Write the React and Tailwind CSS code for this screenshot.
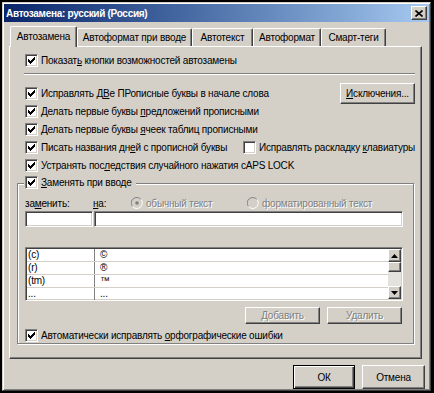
import React from "react";

const raised =
  "border border-t-white border-l-white border-r-[#404040] border-b-[#404040] shadow-[inset_-1px_-1px_0_#808080]";
const sunken =
  "border border-t-[#808080] border-l-[#808080] border-r-white border-b-white shadow-[inset_1px_1px_0_#404040,inset_-1px_-1px_0_#d4d0c8]";

function Check({ checked = true }) {
  return (
    <span className={"inline-flex w-[13px] h-[13px] bg-white shrink-0 items-center justify-center " + sunken}>
      {checked && (
        <svg width="7" height="7" viewBox="0 0 7 7" shapeRendering="crispEdges">
          <rect x="0" y="2" width="1" height="3" />
          <rect x="1" y="3" width="1" height="3" />
          <rect x="2" y="4" width="1" height="3" />
          <rect x="3" y="3" width="1" height="3" />
          <rect x="4" y="2" width="1" height="3" />
          <rect x="5" y="1" width="1" height="3" />
          <rect x="6" y="0" width="1" height="3" />
        </svg>
      )}
    </span>
  );
}

function CheckRow({ children, className = "" }) {
  return (
    <div className={"flex items-center gap-[2px] h-[18px] " + className}>
      <Check />
      <span className="ml-[1px]">{children}</span>
    </div>
  );
}

function Radio({ dot }) {
  return (
    <span className="relative inline-block w-[12px] h-[12px] shrink-0">
      <svg width="12" height="12" viewBox="0 0 12 12">
        <path d="M10 2.5 A5 5 0 0 0 1.5 9.5" stroke="#808080" strokeWidth="1" fill="none" />
        <path d="M1.5 9.5 A5 5 0 0 0 10 2.5" stroke="#ffffff" strokeWidth="1" fill="none" />
        <circle cx="6" cy="6" r="4" fill="#d4d0c8" />
        {dot && <circle cx="6" cy="6" r="1.8" fill="#808080" />}
      </svg>
    </span>
  );
}

function Button({ children, className = "", disabled, def }) {
  return (
    <div
      className={
        "flex items-center justify-center bg-[#d4d0c8] " +
        (def
          ? "border border-black shadow-[inset_1px_1px_0_#fff,inset_-1px_-1px_0_#404040,inset_-2px_-2px_0_#808080] "
          : raised + " ") +
        (disabled ? "text-[#808080] [text-shadow:1px_1px_0_#fff] " : "") +
        className
      }
    >
      {children}
    </div>
  );
}

function Tab({ children, selected, className = "" }) {
  return (
    <div
      className={
        "relative flex items-center justify-center border-l border-t border-l-white border-t-white border-r border-r-[#404040] rounded-tl-[2px] rounded-tr-[2px] bg-[#d4d0c8] shadow-[inset_-1px_0_0_#808080] " +
        (selected ? "h-[21px] z-10 -mb-[1px] pb-[1px] " : "h-[18px] ") +
        className
      }
    >
      {children}
    </div>
  );
}

function ScrollArrow({ up }) {
  return (
    <div className={"w-[13px] h-[13px] flex items-center justify-center bg-[#d4d0c8] " + raised}>
      <svg width="7" height="4" viewBox="0 0 7 4">
        {up ? <path d="M3.5 0 L7 4 L0 4 Z" fill="#000" /> : <path d="M0 0 L7 0 L3.5 4 Z" fill="#000" />}
      </svg>
    </div>
  );
}

export default function App() {
  const rows = [
    ["(c)", "©"],
    ["(r)", "®"],
    ["(tm)", "™"],
    ["...", "..."],
  ];
  return (
    <div
      className="w-[434px] h-[393px] bg-black pt-[2px] pl-[2px] pr-[3px] pb-[2px] text-[10px] tracking-[-0.2px] leading-[13px] text-black whitespace-nowrap overflow-hidden"
      style={{ fontFamily: '"Liberation Sans", Arial, sans-serif' }}
    >
      <div className="w-full h-full bg-[#d4d0c8] border border-t-[#d4d0c8] border-l-[#d4d0c8] border-r-[#404040] border-b-[#404040] shadow-[inset_1px_1px_0_#fff,inset_-1px_-1px_0_#808080] p-[1px] flex flex-col">
        {/* Title bar */}
        <div className="h-[18px] shrink-0 bg-gradient-to-r from-[#0a246a] to-[#a6caf0] flex items-center pl-[2px] pr-[2px]">
          <span className="text-white font-bold text-[10px] tracking-[-0.3px]">Автозамена: русский (Россия)</span>
          <div className={"ml-auto w-[16px] h-[14px] flex items-center justify-center bg-[#d4d0c8] " + raised}>
            <svg width="8" height="7" viewBox="0 0 8 7">
              <path d="M0.5 0.5 L7.5 6.5 M7.5 0.5 L0.5 6.5" stroke="#000" strokeWidth="1.6" />
            </svg>
          </div>
        </div>

        {/* Tabs */}
        <div className="flex items-end pl-[6px] mt-[4px] h-[20px] shrink-0">
          <Tab selected className="w-[67px]">Автозамена</Tab>
          <Tab className="w-[115px]">Автоформат при вводе</Tab>
          <Tab className="w-[61px]">Автотекст</Tab>
          <Tab className="w-[68px]">Автоформат</Tab>
          <Tab className="w-[65px]">Смарт-теги</Tab>
        </div>

        {/* Panel */}
        <div className="ml-[5px] w-[413px] h-[313px] shrink-0 border border-t-white border-l-white border-r-[#404040] border-b-[#404040] shadow-[inset_-1px_-1px_0_#808080] pl-[15px] pr-[6px] pt-[4px] flex flex-col">
          <CheckRow>
            Показат<u>ь</u> кнопки возможностей автозамены
          </CheckRow>
          <div className="mt-[4px] mb-[9px] -ml-[1px] h-[2px] shrink-0 border-t border-t-[#808080] border-b border-b-white" />
          <div className="flex items-center justify-between h-[18px]">
            <CheckRow>
              Исправлять Д<u>В</u>е ПРописные буквы в начале слова
            </CheckRow>
            <Button className="w-[75px] h-[21px]">
              <u>И</u>сключения...
            </Button>
          </div>
          <CheckRow>
            Делать первые буквы <u>п</u>редложений прописными
          </CheckRow>
          <CheckRow>
            Делать первые буквы <u>я</u>чеек таблиц прописными
          </CheckRow>
          <div className="flex items-center h-[18px]">
            <CheckRow className="w-[218px]">
              Писать названия дн<u>е</u>й с прописной буквы
            </CheckRow>
            <div className="flex items-center gap-[3px]">
              <Check checked={false} />
              <span>
                Исправлять раскладку <u>к</u>лавиатуры
              </span>
            </div>
          </div>
          <CheckRow>
            Устранять пос<u>л</u>едствия случайного нажатия cAPS LOCK
          </CheckRow>

          {/* Group box */}
          <div className="relative -ml-[8px] w-[397px] mt-[9px] h-[161px] shrink-0 border border-[#808080] shadow-[inset_1px_1px_0_#fff,1px_1px_0_#fff] px-[7px] pt-[12px]">
            <div className="absolute -top-[11px] left-[6px] bg-[#d4d0c8] pr-[4px] pl-[1px]">
              <CheckRow>
                <u>З</u>аменять при вводе
              </CheckRow>
            </div>
            <div className="flex items-center h-[14px]">
              <span className="w-[68px]">
                за<u>м</u>енить:
              </span>
              <span className="w-[38px]">
                <u>н</u>а:
              </span>
              <span className="flex items-center gap-[3px] text-[#808080] [text-shadow:1px_1px_0_#fff] w-[116px]">
                <Radio dot /> обычный текст
              </span>
              <span className="flex items-center gap-[3px] text-[#808080] [text-shadow:1px_1px_0_#fff]">
                <Radio /> форматированный текст
              </span>
            </div>
            <div className="flex mt-[1px] gap-[1px]">
              <div className={"w-[68px] h-[16px] bg-white " + sunken} />
              <div className={"w-[309px] h-[16px] bg-white " + sunken} />
            </div>
            <div className={"mt-[20px] w-[378px] h-[54px] bg-white flex " + sunken}>
              <div className="flex-1 flex flex-col pl-[1px] pt-[1px]">
                {rows.map((r, i) => (
                  <div key={i} className="flex h-[13px] border-b border-b-[#d4d0c8] last:border-b-0">
                    <div className="w-[68px] border-r border-r-[#808080] pl-[1px] leading-[12px]">{r[0]}</div>
                    <div className="flex-1 pl-[5px] leading-[12px]">{r[1]}</div>
                  </div>
                ))}
              </div>
              <div className="w-[13px] flex flex-col bg-[#e4e2dc] my-[1px] mr-[1px]">
                <ScrollArrow up />
                <div className={"w-[13px] h-[10px] bg-[#d4d0c8] " + raised} />
                <div className="flex-1" />
                <ScrollArrow />
              </div>
            </div>
            <div className="flex justify-end gap-[7px] mt-[6px] pr-[4px]">
              <Button disabled className="w-[75px] h-[17px]">
                Добавить
              </Button>
              <Button disabled className="w-[75px] h-[17px]">
                Удалить
              </Button>
            </div>
            <CheckRow className="mt-[2px] h-[17px]">
              Автоматически исправлять <u>о</u>рфографические ошибки
            </CheckRow>
          </div>
        </div>

        {/* Bottom buttons */}
        <div className="flex justify-end gap-[7px] mt-[6px] pr-[4px]">
          <Button def className="w-[62px] h-[24px]">
            ОК
          </Button>
          <Button className="w-[63px] h-[24px]">Отмена</Button>
        </div>
      </div>
    </div>
  );
}
